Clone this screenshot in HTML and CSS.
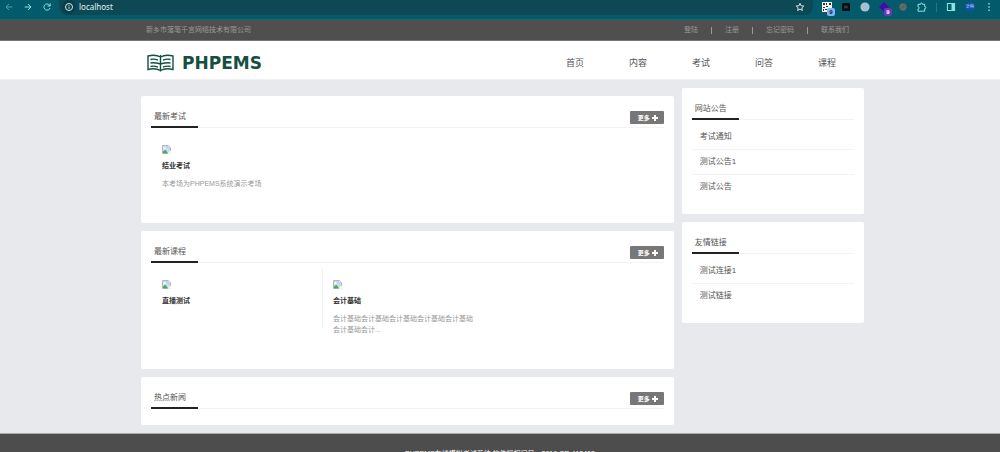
FILE: index.html
```html
<!DOCTYPE html>
<html lang="zh-CN">
<head>
<meta charset="utf-8">
<meta name="viewport" content="width=device-width, initial-scale=1">
<title>PHPEMS</title>
<link rel="stylesheet" href="styles.css">
</head>
<body>
<svg class="defs" aria-hidden="true">
  <symbol id="broken" viewBox="0 0 9 9">
    <path d="M.5.5h5.700l2.300 2.300v5.700h-8z" fill="#c9dcf6" stroke="#a3a9b3" stroke-width=".8"/>
    <path d="M6 .5v2.400h2.500" fill="#fff" stroke="#a3a9b3" stroke-width=".6"/>
    <path d="M1 8.200V6.600L3.400 4.800 6 8.200z" fill="#4cab3d"/>
    <path d="M5.400 8.800l3.400-3.600v3.600z" fill="#fff"/>
    <path d="M1.400 3.400c0-1 1.600-1 1.800-.4.8 0 .8.9 0 .9H1.800z" fill="#fff"/>
  </symbol>
  <symbol id="plus" viewBox="0 0 6 6"><path d="M3 0v6M0 3h6" stroke="#fff" stroke-width="2"/></symbol>
</svg>

<div class="browser">
  <button class="tool back" aria-label="后退"><svg viewBox="0 0 10 10"><path d="M8.300 5H2M5 2L2 5l3 3"/></svg></button>
  <button class="tool" aria-label="前进"><svg viewBox="0 0 10 10"><path d="M1.700 5H8M5 2l3 3-3 3"/></svg></button>
  <button class="tool reload" aria-label="刷新"><svg viewBox="0 0 10 10"><path d="M8 6a3.100 3.100 0 1 1-.7-3.100L8.100 4M8.200 1.400V4H5.600"/></svg></button>
  <div class="omnibox">
    <span class="site"><svg viewBox="0 0 10 10"><circle cx="5" cy="5" r="3.500"/><path d="M5 4.600v2.200M5 3v.8"/></svg></span>
    <input class="address" type="text" value="localhost" aria-label="地址">
    <button class="tool star" aria-label="收藏"><svg viewBox="0 0 10 10"><path d="M5 1.300l1.100 2.500 2.700.2-2 1.800.6 2.700L5 7.100 2.600 8.500l.6-2.700-2-1.800 2.700-.2z"/></svg></button>
  </div>
  <div class="extensions">
    <span class="ext"><svg viewBox="0 0 10 10"><path class="fill-white" d="M0 0h10v10H0z"/><path class="fill-dark" d="M1 1h2v2H1zM4 1h1v2H4zM7 1h2v2H7zM1 5h2v1H1zM4 4h2v1H4zM1 7h1v2H1zM3 7h2v1H3z"/></svg><b class="badge blue">9</b></span>
    <span class="ext"><svg viewBox="0 0 10 10"><rect class="fill-black" x="1" y="1" width="8" height="8" rx="1"/><path class="teal-line" d="M4 3.500v3M6 3.500v3M4 5h2"/></svg></span>
    <span class="ext"><svg viewBox="0 0 10 10"><circle class="fill-gray" cx="5" cy="5" r="4.600"/><circle class="fill-sky" cx="5" cy="5" r="2.800"/></svg></span>
    <span class="ext"><svg viewBox="0 0 10 10"><path class="fill-indigo" d="M5 0l5 5-5 5-5-5z"/></svg><b class="badge purple">9</b></span>
    <span class="ext"><svg viewBox="0 0 10 10"><circle class="fill-brown" cx="5" cy="5" r="3.400"/><circle class="dots" cx="5" cy="5" r="3.600"/><path class="teal-line" d="M3.500 6.500l3-3"/></svg></span>
    <span class="ext"><svg viewBox="0 0 10 10"><path d="M1 2.300h2.600c-.3-1.800 2.100-1.800 1.800 0h2.300v2.400c1.700-.3 1.700 2.100 0 1.800v2.700H1V7c1.600 0 1.600-2.200 0-2.200z"/></svg></span>
    <span class="divider"></span>
    <span class="ext"><svg viewBox="0 0 10 10"><rect x="1.400" y="1.500" width="7.200" height="7"/><path class="fill-mint" d="M5.500 1.500h3v7h-3z"/></svg></span>
    <span class="avatar">计科</span>
    <span class="ext menu"><svg viewBox="0 0 10 10"><path class="fill-mint" d="M4.300 1h1.400v1.500H4.300zM4.300 4.300h1.400v1.400H4.300zM4.300 7.500h1.400V9H4.300z"/></svg></span>
  </div>
</div>

<div class="topbar">
  <div class="container topbar-row">
    <span>新乡市落笔千言网络技术有限公司</span>
    <div class="account">
      <a href="#">登陆</a><i></i><a href="#">注册</a><i></i><a href="#">忘记密码</a><i></i><a href="#">联系我们</a>
    </div>
  </div>
</div>

<header class="header">
  <div class="container header-row">
    <a class="logo" href="#">
      <svg viewBox="0 0 27 18"><path d="M13.500 1v16.500M13.500 3C10 1 5 1 1 2v13.500c4-1 9-1 12.500 1 3.500-2 8.500-2 12.500-1V2c-4-1-9-1-12.500 1M3.500 5.500c2.500-.6 5-.4 7.500.6M3.500 9c2.500-.6 5-.4 9.500.8M3.500 12.500c2.500-.6 5-.4 7.500.6M23.500 5.500c-2.500-.6-5-.4-7.500.6M23.500 9c-2.500-.6-5-.4-9.500.8M23.500 12.500c-2.500-.6-5-.4-7.500.6"/></svg>
      <span>PHPEMS</span>
    </a>
    <nav class="nav">
      <a href="#">首页</a><a href="#">内容</a><a href="#">考试</a><a href="#">问答</a><a href="#">课程</a>
    </nav>
  </div>
</header>

<main class="container columns">
  <div class="main-column">
    <section class="card">
      <div class="card-head">
        <h2>最新考试</h2>
        <a class="more" href="#">更多 <svg><use href="#plus"/></svg></a>
      </div>
      <div class="items">
        <article class="item">
          <svg class="thumb"><use href="#broken"/></svg>
          <h3>结业考试</h3>
          <p>本考场为PHPEMS系统演示考场</p>
        </article>
      </div>
    </section>
    <section class="card">
      <div class="card-head">
        <h2>最新课程</h2>
        <a class="more" href="#">更多 <svg><use href="#plus"/></svg></a>
      </div>
      <div class="items tall">
        <article class="item">
          <svg class="thumb"><use href="#broken"/></svg>
          <h3>直播测试</h3>
        </article>
        <article class="item">
          <svg class="thumb"><use href="#broken"/></svg>
          <h3>会计基础</h3>
          <p>会计基础会计基础会计基础会计基础会计基础<br>会计基础会计...</p>
        </article>
      </div>
    </section>
    <section class="card news">
      <div class="card-head">
        <h2>热点新闻</h2>
        <a class="more" href="#">更多 <svg><use href="#plus"/></svg></a>
      </div>
    </section>
  </div>
  <aside class="side-column">
    <section class="card side">
      <div class="card-head"><h2>网站公告</h2></div>
      <ul class="links">
        <li><a href="#">考试通知</a></li>
        <li><a href="#">测试公告1</a></li>
        <li><a href="#">测试公告</a></li>
      </ul>
    </section>
    <section class="card side">
      <div class="card-head"><h2>友情链接</h2></div>
      <ul class="links">
        <li><a href="#">测试连接1</a></li>
        <li><a href="#">测试链接</a></li>
      </ul>
    </section>
  </aside>
</main>

<footer class="footer">PHPEMS在线模拟考试系统 软件授权问号：2019-SR-418408</footer>
</body>
</html>
```

FILE: styles.css
```css
* { box-sizing: border-box; }
body {
  margin: 0;
  height: 100vh;
  overflow: hidden;
  background: #e8e9ed;
  color: #555;
  font: 8px/12px "Liberation Sans", "Noto Sans CJK SC", sans-serif;
}
a { color: inherit; text-decoration: none; }
h2, h3, p, ul { margin: 0; padding: 0; font-weight: 400; }
button { padding: 0; border: 0; background: none; }
.defs { position: absolute; width: 0; height: 0; }
.container { width: 72.3%; margin: 0 auto 0 14.1%; }

.browser {
  display: flex;
  align-items: center;
  height: 20px;
  padding: 0 6px 5px 4px;
  background: #035a6b;
  border-bottom: 1px solid #1d6675;
}
.browser svg {
  display: block;
  width: 10px;
  height: 10px;
  fill: none;
  stroke: #8fe3e0;
  stroke-width: 1;
}
.browser .tool { width: 10px; height: 10px; margin-right: 9px; }
.browser .back { opacity: .5; }
.browser .reload { margin-right: 7px; }
.omnibox {
  display: flex;
  flex: 1;
  align-items: center;
  height: 15px;
  padding: 0 8px 0 3px;
  border-radius: 0 0 8px 8px;
  background: #0d4855;
}
.omnibox .site { padding: 2px; border-radius: 50%; background: #07404d; }
.omnibox .site svg, .omnibox .star svg { stroke: #d8e8ea; }
.omnibox .star { margin: 0; }
.address {
  flex: 1;
  min-width: 0;
  height: 12px;
  margin: 0 0 0 3px;
  padding: 0;
  border: 0;
  background: none;
  color: #e4f0f1;
  font: 8px/12px "Noto Sans", sans-serif;
}
.extensions { display: flex; align-items: center; gap: 9px; padding-left: 9px; }
.ext { position: relative; }
.badge {
  position: absolute;
  right: -3px;
  bottom: -4px;
  width: 8px;
  border-radius: 2px;
  font-size: 6px;
  line-height: 8px;
  text-align: center;
}
.blue { background: #82b1f5; color: #123; }
.purple { background: #6b38b5; color: #fff; }
.browser .fill-white { fill: #f2f2f2; stroke: none; }
.browser .fill-dark { fill: #333; stroke: none; }
.browser .fill-black { fill: #050b0d; stroke: none; }
.browser .fill-gray { fill: #b9bcbc; stroke: none; }
.browser .fill-sky { fill: #8fc5ef; stroke: none; }
.browser .fill-indigo { fill: #3f0fa5; stroke: none; }
.browser .fill-brown { fill: #6c6865; stroke: none; }
.browser .fill-mint { fill: #8fe3e0; stroke: none; }
.browser .dots { stroke: #6c6865; stroke-dasharray: 1 1; }
.browser .teal-line { stroke: #22606b; }
.divider { width: 1px; height: 9px; background: #2b7482; }
.avatar {
  width: 10px;
  height: 10px;
  border-radius: 50%;
  background: #0b50a4;
  color: #dce8ff;
  font-size: 4px;
  line-height: 10px;
  text-align: center;
}

.topbar { background: #4f4f4f; color: #999; border-bottom: 1px solid #777; }
.topbar-row {
  display: flex;
  align-items: center;
  justify-content: space-between;
  height: 20px;
  padding: 0 15px 0 5px;
  font-size: 7px;
}
.account { display: flex; align-items: center; gap: 13px; }
.account i { width: 1px; height: 7px; background: #999; }

.header { background: #fff; border-bottom: 1px solid #f2f2f4; }
.header-row {
  display: flex;
  align-items: center;
  justify-content: space-between;
  height: 38px;
  padding: 5px 28px 0 6px;
}
.logo {
  display: flex;
  align-items: center;
  gap: 8px;
  color: #154f42;
  font: bold 17px/20px "DejaVu Sans", sans-serif;
}
.logo svg { width: 27px; height: 18px; fill: none; stroke: #154f42; stroke-width: 1.4; }
.nav { display: flex; gap: 45px; font-size: 9px; }

.columns { display: flex; align-items: flex-start; gap: 8px; padding: 8px 0; }
.main-column { flex: 1; padding-top: 8px; }
.side-column { flex: 0 0 25.2%; }
.main-column, .side-column { display: grid; gap: 8px; }
.card { padding: 12px 10px 0; border-radius: 2px; background: #fff; }
.card-head {
  display: flex;
  align-items: flex-end;
  justify-content: space-between;
  height: 20px;
  border-bottom: 1px solid #f3f3f3;
}
.card-head h2 {
  width: 47px;
  height: 20px;
  margin-bottom: -1px;
  padding: 3px 3px 0;
  border-bottom: 2px solid #222;
  font-size: 8px;
  line-height: 12px;
}
.more {
  display: flex;
  align-items: center;
  gap: 2px;
  height: 13px;
  margin-bottom: 3px;
  padding: 0 6px 0 8px;
  border-radius: 1px;
  background: #777;
  color: #fff;
  font-size: 6px;
  font-weight: 700;
}
.more svg { width: 6px; height: 6px; }
.items { display: grid; grid-template-columns: repeat(3, 1fr); height: 95px; padding-top: 5px; }
.items.tall { height: 106px; }
.item { height: 60px; padding: 12px 11px 0; }
.item + .item { padding-left: 10px; border-left: 1px solid #f1f1f1; }
.item .thumb { display: block; width: 9px; height: 9px; }
.item h3 { margin-top: 6px; color: #333; font-size: 7px; font-weight: 700; line-height: 12px; }
.item p { margin-top: 6px; color: #999; font-size: 7px; line-height: 11px; white-space: nowrap; }
.news { padding-bottom: 16px; }
.side { padding-bottom: 14px; }
.links { list-style: none; }
.links li { height: 25px; padding: 0 8px; border-bottom: 1px solid #f3f3f3; line-height: 24px; }
.links li:last-child { border: 0; }
.links li:first-child { height: 30px; padding-top: 5px; }

.footer {
  height: 60px;
  padding-top: 14px;
  border-top: 1px solid #aaa;
  background: #4d4d4d;
  color: #fff;
  font-size: 7px;
  line-height: 12px;
  text-align: center;
}
```
